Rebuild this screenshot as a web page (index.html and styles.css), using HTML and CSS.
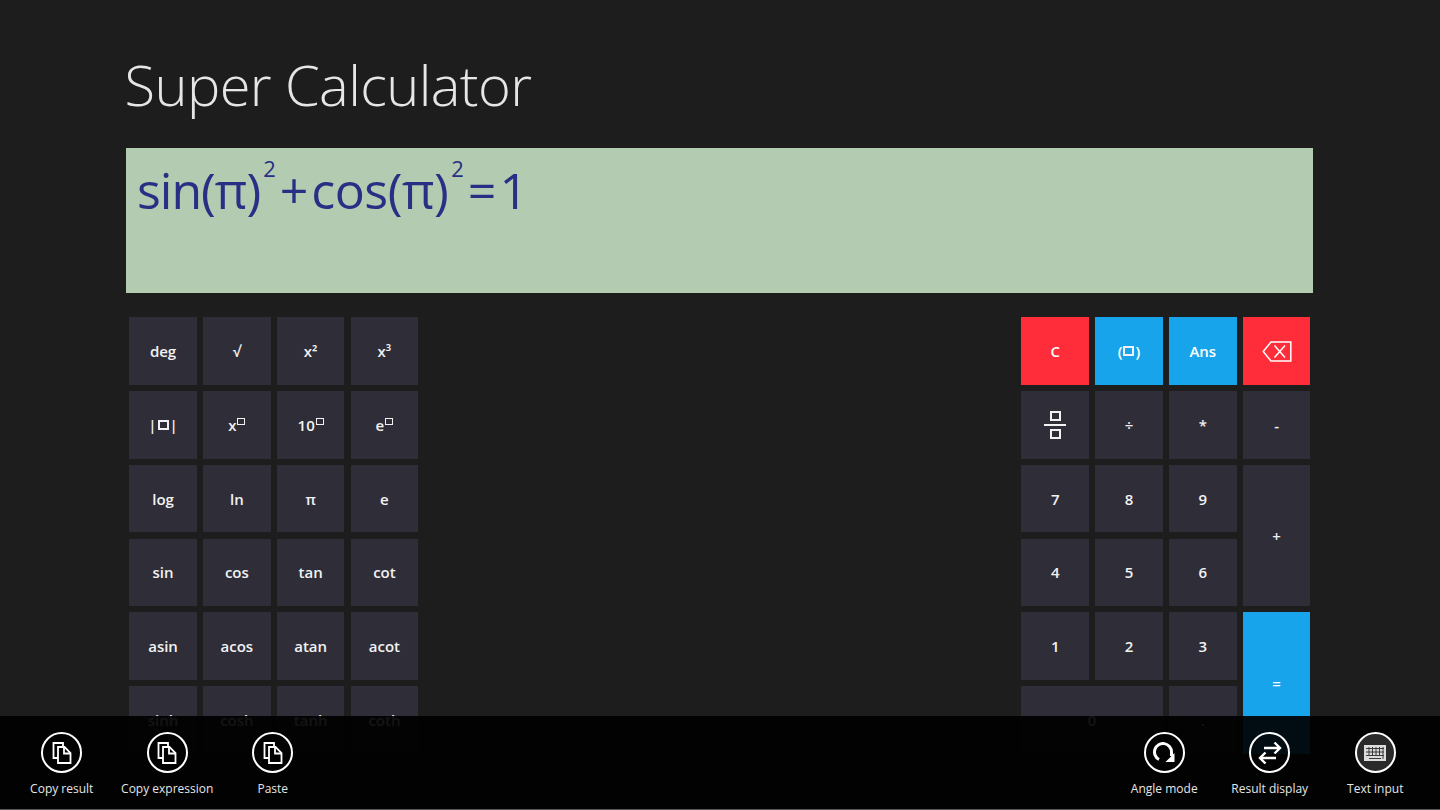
FILE: index.html
```html
<!DOCTYPE html>
<html lang="en">
<head>
  <meta charset="UTF-8" />
  <title>Super Calculator</title>
  <link rel="stylesheet" href="styles.css">
</head>
<body>

  <div class="main">
    <h1 class="title">Super Calculator</h1>

    <!-- Result display -->
    <div class="display">
      <span>sin(π)</span><sup>2</sup><span class="op">+</span><span class="cos">cos(π)</span><sup>2</sup><span class="op">=</span><span>1</span>
    </div>

    <div class="keypads">
      <!-- Functions -->
      <div class="keys">
        <div class="key">deg</div>
        <div class="key">√</div>
        <div class="key">x²</div>
        <div class="key">x³</div>
        <div class="key">|<i class="box"></i>|</div>
        <div class="key">x<i class="box small"></i></div>
        <div class="key">10<i class="box small"></i></div>
        <div class="key">e<i class="box small"></i></div>
        <div class="key">log</div>
        <div class="key">ln</div>
        <div class="key">π</div>
        <div class="key">e</div>
        <div class="key">sin</div>
        <div class="key">cos</div>
        <div class="key">tan</div>
        <div class="key">cot</div>
        <div class="key">asin</div>
        <div class="key">acos</div>
        <div class="key">atan</div>
        <div class="key">acot</div>
        <div class="key">sinh</div>
        <div class="key">cosh</div>
        <div class="key">tanh</div>
        <div class="key">coth</div>
      </div>

      <!-- Numbers -->
      <div class="keys">
        <div class="key red">C</div>
        <div class="key blue">(<i class="box"></i>)</div>
        <div class="key blue">Ans</div>
        <div class="key red">
          <svg width="30" height="21" viewBox="0 0 30 21" fill="none" stroke="#fff" stroke-width="1.500">
            <path d="M28.800 1H9L1.200 10.500 9 20h19.800z"/>
            <path d="M12.500 4.500l10.500 12M23 4.500l-10.500 12"/>
          </svg>
        </div>
        <div class="key">
          <div class="fraction"><i class="box"></i><b></b><i class="box"></i></div>
        </div>
        <div class="key">÷</div>
        <div class="key">*</div>
        <div class="key">-</div>
        <div class="key">7</div>
        <div class="key">8</div>
        <div class="key">9</div>
        <div class="key tall">+</div>
        <div class="key">4</div>
        <div class="key">5</div>
        <div class="key">6</div>
        <div class="key">1</div>
        <div class="key">2</div>
        <div class="key">3</div>
        <div class="key tall blue">=</div>
        <div class="key wide">0</div>
        <div class="key">.</div>
      </div>
    </div>
  </div>

  <!-- App bar -->
  <div class="appbar">
    <div class="group">
      <div class="cmd">
        <span class="ring">
          <svg width="20" height="22" viewBox="0 0 20 22" fill="none" stroke="#fff" stroke-width="1.800">
            <path d="M11 4V1H1.500v15H6"/><path d="M6 5h6.500l6 6v10H6z"/><path d="M12 5v6.500h6.500"/>
          </svg>
        </span>
        <span>Copy result</span>
      </div>
      <div class="cmd">
        <span class="ring">
          <svg width="20" height="22" viewBox="0 0 20 22" fill="none" stroke="#fff" stroke-width="1.800">
            <path d="M11 4V1H1.500v15H6"/><path d="M6 5h6.500l6 6v10H6z"/><path d="M12 5v6.500h6.500"/>
          </svg>
        </span>
        <span>Copy expression</span>
      </div>
      <div class="cmd">
        <span class="ring">
          <svg width="20" height="22" viewBox="0 0 20 22" fill="none" stroke="#fff" stroke-width="1.800">
            <path d="M11 4V1H1.500v15H6"/><path d="M6 5h6.500l6 6v10H6z"/><path d="M12 5v6.500h6.500"/>
          </svg>
        </span>
        <span>Paste</span>
      </div>
    </div>
    <div class="group">
      <div class="cmd">
        <span class="ring">
          <svg width="22" height="21" viewBox="0 0 22 21" fill="none" stroke="#fff" stroke-width="3">
            <path d="M6 17.500A8.500 8.500 0 1 1 18.500 10v4"/>
            <path d="M12.500 20h9v-9z" fill="#fff" stroke="none"/>
          </svg>
        </span>
        <span>Angle mode</span>
      </div>
      <div class="cmd">
        <span class="ring">
          <svg width="24" height="24" viewBox="0 0 24 24" fill="none" stroke="#fff" stroke-width="2.400">
            <path d="M6 7h16M16.500 1.500L22 7l-5.500 5.500"/>
            <path d="M18 17H2M7.500 11.500L2 17l5.500 5.500"/>
          </svg>
        </span>
        <span>Result display</span>
      </div>
      <div class="cmd">
        <span class="ring filled">
          <svg width="22" height="16" viewBox="0 0 22 16" fill="none">
            <rect width="22" height="16" fill="#dcdcdc"/>
            <path d="M2 3.500h18M2 7h18M2 10.500h18M5 13.500h12M5 2v9M8.500 2v9M12 2v9M15.500 2v9M19 2v12" stroke="#3a3a3a" stroke-width="1"/>
          </svg>
        </span>
        <span>Text input</span>
      </div>
    </div>
  </div>

</body>
</html>
```

FILE: styles.css
```css
* {
  box-sizing: border-box;
}
html, body {
  height: 100%;
}
body {
  margin: 0;
  background: #1d1d1d;
  color: #fff;
  font-family: 'Open Sans', 'Noto Sans', sans-serif;
  overflow: hidden;
}

/* Layout */
.main {
  padding: 0 127px 0 126px;
}

.title {
  margin: 0 0 0 -1.500px;
  padding-top: 45px;
  height: 148px;
  font-size: 56px;
  line-height: 78px;
  letter-spacing: -0.600px;
  font-weight: 300;
  color: #e6e6e6;
}

.display {
  height: 145px;
  background: #b3cbb0;
  color: #2a2e85;
  padding: 8px 0 0 11px;
  font-size: 50px;
  line-height: 68px;
  display: flex;
  align-items: flex-start;
  letter-spacing: -1px;
}

.display sup {
  font-size: 22px;
  line-height: 26px;
  margin: -1px 5px 0 3px;
}

.display .op {
  margin-right: 4px;
}

.display .cos {
  letter-spacing: -0.500px;
}

.keypads {
  display: flex;
  justify-content: space-between;
  padding: 24.300px 2.700px 0 3.300px;
}

.keys {
  display: grid;
  grid-template-columns: repeat(4, 67.500px);
  grid-auto-rows: 67.500px;
  gap: 6.300px;
}

.key {
  display: flex;
  align-items: center;
  justify-content: center;
  background: #2f2e38;
  font-size: 15px;
  font-weight: 600;
  color: #f2f2f2;
}

.key.red {
  background: #ff2d3a;
  color: #fff;
}

.key.blue {
  background: #18a4ea;
  color: #fff;
}

.key.tall {
  grid-row: span 2;
  grid-column: 4;
}

.key.wide {
  grid-column: span 2;
}

.box {
  display: inline-block;
  width: 11px;
  height: 10px;
  margin: 0 1px;
  border: 2px solid #f2f2f2;
}

.box.small {
  width: 8px;
  height: 7px;
  margin: 0 0 7px 1px;
  border-width: 1.500px;
}

.fraction {
  display: flex;
  flex-direction: column;
  align-items: center;
  gap: 3px;
}

.fraction b {
  display: block;
  width: 22px;
  height: 1.500px;
  background: #f2f2f2;
}

/* App bar */
.appbar {
  position: absolute;
  left: 0;
  right: 0;
  bottom: 0;
  height: 94px;
  background: rgba(0, 0, 0, 0.92);
  border-bottom: 1px solid #555;
  display: flex;
  justify-content: space-between;
  padding: 16px 12px 0 9px;
}

.group {
  display: flex;
}

.cmd {
  width: 105.500px;
  display: flex;
  flex-direction: column;
  align-items: center;
  gap: 7px;
  font-size: 12px;
  line-height: 18px;
  color: #e6e6e6;
  white-space: nowrap;
}

.ring {
  width: 41px;
  height: 41px;
  border: 2px solid #fff;
  border-radius: 50%;
  display: flex;
  align-items: center;
  justify-content: center;
}

.ring.filled {
  background: #2a2a2a;
}
```
